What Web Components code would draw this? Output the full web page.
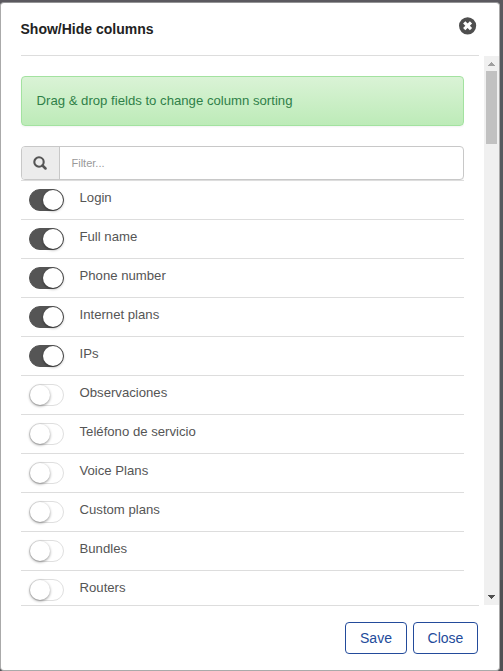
<!DOCTYPE html>
<html lang="en"><head><meta charset="utf-8"><title>Show/Hide columns</title>
<style>
html,body{margin:0;height:100%;overflow:hidden}
body{background:linear-gradient(#5b595f 0 20px,#56585e 20px 109px,#56595e 110px 580px,#505054 580px);font-family:"Liberation Sans",Arial,sans-serif;font-size:13.16px;color:#555}
</style></head><body>
<columns-dialog></columns-dialog>
<script>
const define=(name,html,init)=>{
  const t=document.createElement('template');t.innerHTML=html;
  customElements.define(name,class extends HTMLElement{
    constructor(){super();this.attachShadow({mode:'open'}).append(t.content.cloneNode(true));if(init)init(this.shadowRoot)}
  });
};
define('toggle-switch',`<style>
:host{display:block;box-sizing:border-box;width:35px;height:22px;border-radius:11px;background:#fff;border:1px solid #dfdfdf}
i{display:block;width:20px;height:20px;border-radius:50%;background:#fff;box-shadow:0 1px 3px rgba(0,0,0,.45)}
:host([checked]){background:#555;border-color:#555}
:host([checked]) i{margin-left:13px}
</style><i></i>`);
define('column-row',`<style>
:host{display:flex;box-sizing:border-box;height:39px;flex:none;border-top:1px solid #ddd;padding:8px 8px 0;gap:15.5px}
span{line-height:17px}
:host([on]) .off,:host(:not([on])) .on{display:none}
</style><toggle-switch class="on" checked></toggle-switch><toggle-switch class="off"></toggle-switch><span><slot></slot></span>`);
define('info-alert',`<style>
:host{display:block;box-sizing:border-box;height:50px;border:1px solid #a3e2a0;border-radius:4px;background:linear-gradient(#daf3d6,#bdebb8);padding:0 14.5px;line-height:48px;color:#2f8048;box-shadow:0 1px 2px rgba(0,0,0,.05)}
</style><slot></slot>`);
define('filter-field',`<style>
:host{display:flex;box-sizing:border-box;height:34px;border:1px solid #c8c8c8;border-radius:4px;background:#fff;overflow:hidden;box-shadow:0 1px 1px rgba(0,0,0,.04)}
.icon{box-sizing:border-box;width:38px;background:#ececec;border-right:1px solid #c8c8c8;display:flex;align-items:center;padding-left:11px}
.text{padding-left:11.5px;line-height:32px;font-size:11px;color:#999}
svg{display:block}
</style><div class="icon"><svg width="14" height="14" viewBox="0 0 14 14" fill="none" stroke="#555" stroke-width="2.1"><circle cx="6" cy="6" r="4.7"/><path d="M9.5 9.5l3 3" stroke-width="2.5" stroke-linecap="round"/></svg></div><div class="text"><slot></slot></div>`);
define('scroll-bar',`<style>
:host{display:grid;grid-template-rows:15px 73px 1fr 17px;width:15px;height:549px;background:#f0f0f0;justify-items:center}
.thumb{width:11px;background:#c1c1c1}
svg{display:block}
</style><svg width="15" height="15" shape-rendering="crispEdges"><path fill="#a0a0a0" d="M7 6h1v1h1v1h1v1h1v1H4V9h1V8h1V7h1z"/></svg><div class="thumb"></div><div></div><svg width="15" height="17" shape-rendering="crispEdges"><path fill="#505050" d="M4 7h7v1h-1v1H9v1H8v1H7v-1H6V9H5V8H4z"/></svg>`);
define('outline-button',`<style>
:host{display:block;box-sizing:border-box;height:32px;border:1px solid #234b9b;border-radius:4px;color:#234b9b;background:#fff;font-size:14px;line-height:30px;text-align:center}
</style><slot></slot>`);
define('columns-dialog',`<style>
:host{display:flex;flex-direction:column;box-sizing:border-box;width:500px;height:669px;margin-top:2px;border:1px solid #aaa;border-top-color:#949496;border-radius:4px;background:#fff}
header{display:flex;justify-content:space-between;box-sizing:border-box;height:53px;margin:0 20px;border-bottom:1px solid #ddd;flex:none}
h1{margin:0 0 0 -.5px;font-size:14px;line-height:52px;color:#222}
header svg{margin:14px 2px 0 0}
.body{display:flex;height:549px;flex:none;justify-content:space-between}
main{display:flex;flex-direction:column;height:549px;padding:20px 0 0 20px;box-sizing:border-box;width:463px;overflow:hidden}
info-alert,filter-field{flex:none}
filter-field{margin-top:20px}
.list{display:flex;flex-direction:column}
footer{display:flex;justify-content:flex-end;gap:6px;border-top:1px solid #ddd;margin:0 20px;padding:16px 1px 0 0}
</style>
<header><h1>Show/Hide columns</h1><svg width="18" height="18" viewBox="0 0 18 18"><circle cx="8.6" cy="8.8" r="8.6" fill="#4f4f4f"/><path d="M5.2 5.4l6.8 6.8M12 5.4l-6.8 6.8" stroke="#fff" stroke-width="3.2"/></svg></header>
<div class="body"><main><info-alert>Drag &amp; drop fields to change column sorting</info-alert><filter-field>Filter...</filter-field><div class="list"></div></main><scroll-bar></scroll-bar></div>
<footer><outline-button style="width:62px">Save</outline-button><outline-button style="width:65px">Close</outline-button></footer>`,root=>{
  const list=root.querySelector('.list');
  ['Login','Full name','Phone number','Internet plans','IPs','Observaciones','Teléfono de servicio','Voice Plans','Custom plans','Bundles','Routers'].forEach((name,i)=>{
    const row=document.createElement('column-row');row.textContent=name;row.toggleAttribute('on',i<5);list.append(row);
  });
});
</script></body></html>
